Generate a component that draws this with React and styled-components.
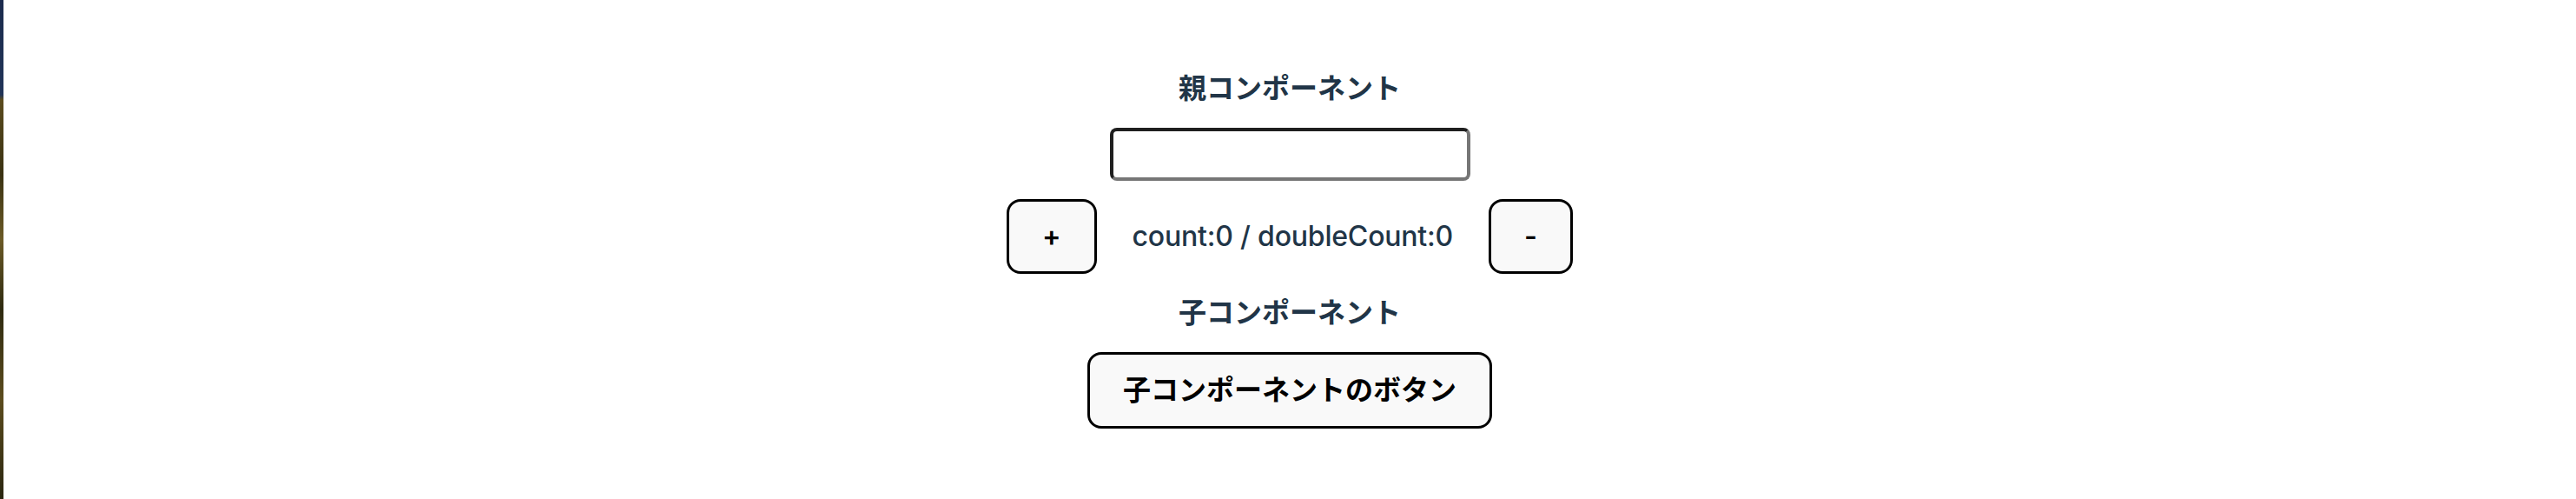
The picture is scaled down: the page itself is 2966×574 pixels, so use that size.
import React, { useState } from "react";
import styled, { createGlobalStyle } from "styled-components";

const GlobalStyle = createGlobalStyle`
  body {
    margin: 0;
    background: #ffffff;
    color: #213547;
    font-family: Inter, "Noto Sans CJK JP", sans-serif;
  }
`;

const Page = styled.div`
  display: flex;
  min-height: 574px;
`;

const Edge = styled.div`
  width: 4px;
  flex-shrink: 0;
  background: linear-gradient(
    180deg,
    #1b2b4d 0%,
    #213458 19%,
    #5b4b1e 20%,
    #3a3212 35%,
    #6b5a26 48%,
    #2e2a10 62%,
    #5c4c1e 80%,
    #2a2610 100%
  );
`;

const Main = styled.main`
  flex: 1;
  display: flex;
  flex-direction: column;
  align-items: center;
  gap: 21px;
  padding-top: 78px;
`;

const Heading = styled.h2`
  margin: 0;
  font-size: 32px;
  line-height: 48px;
  font-weight: 600;
  color: #213547;
`;

const TextInput = styled.input`
  box-sizing: border-box;
  width: 415px;
  height: 61px;
  border: 4px solid;
  border-color: #1f1f1f #767676 #767676 #1f1f1f;
  border-radius: 8px;
  background: #fff;
  font-size: 32px;
  padding: 0 8px;
  outline: none;
`;

const Row = styled.div`
  display: flex;
  align-items: center;
  gap: 41px;
`;

const Count = styled.span`
  font-size: 32px;
  line-height: 48px;
  font-weight: 500;
  letter-spacing: -0.2px;
  color: #213547;
`;

const Button = styled.button`
  border: 3px solid #000;
  border-radius: 16px;
  background: #f9f9f9;
  color: #000;
  font-family: Inter, "Noto Sans CJK JP", sans-serif;
  font-size: 32px;
  font-weight: 600;
  line-height: ${({ $tall }) => ($tall ? 44 : 42)}px;
  padding: 19px 38px;
  cursor: pointer;
`;

function Child() {
  return (
    <>
      <Heading>子コンポーネント</Heading>
      <Button $tall>子コンポーネントのボタン</Button>
    </>
  );
}

export default function App() {
  const [text, setText] = useState("");
  const [count, setCount] = useState(0);
  return (
    <>
      <GlobalStyle />
      <Page>
        <Edge />
        <Main>
          <Heading>親コンポーネント</Heading>
          <TextInput value={text} onChange={(e) => setText(e.target.value)} />
          <Row>
            <Button onClick={() => setCount(count + 1)}>+</Button>
            <Count>
              count:{count} / doubleCount:{count * 2}
            </Count>
            <Button onClick={() => setCount(count - 1)}>-</Button>
          </Row>
          <Child />
        </Main>
      </Page>
    </>
  );
}
